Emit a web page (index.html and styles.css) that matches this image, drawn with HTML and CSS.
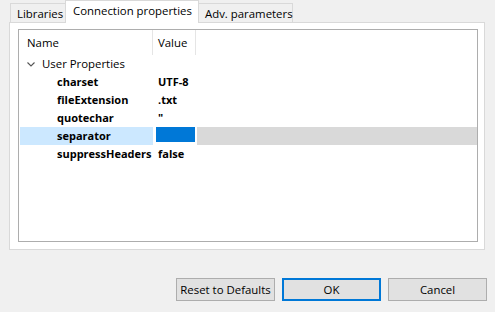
FILE: index.html
```html
<!DOCTYPE html>
<html>
<head>
<meta charset="utf-8">
<link rel="stylesheet" href="styles.css">
</head>
<body>
<div class="tabs">
  <div class="tab">Libraries</div>
  <div class="tab active">Connection properties</div>
  <div class="tab">Adv. parameters</div>
</div>
<div class="panel">
  <div class="tree">
    <div class="grid">
      <div class="hcell c1">Name</div>
      <div class="hcell c2">Value</div>
      <div class="hcell c3"></div>

      <div class="cell group">
        <svg class="chev" width="8" height="5" viewBox="0 0 8 5"><polyline points="0.5,0.5 4,4 7.5,0.5" fill="none" stroke="#555" stroke-width="1.1"/></svg>
        <span>User Properties</span>
      </div>
      <div class="cell"></div>
      <div class="cell"></div>

      <div class="cell name">charset</div>
      <div class="cell val">UTF-8</div>
      <div class="cell"></div>

      <div class="cell name">fileExtension</div>
      <div class="cell val">.txt</div>
      <div class="cell"></div>

      <div class="cell name">quotechar</div>
      <div class="cell val">"</div>
      <div class="cell"></div>

      <div class="cell name sel">separator</div>
      <div class="cell edit"><div class="editbox"></div></div>
      <div class="cell fill"><div class="greybox"></div></div>

      <div class="cell name">suppressHeaders</div>
      <div class="cell val">false</div>
      <div class="cell"></div>
    </div>
  </div>
</div>
<div class="footer">
  <button class="btn">Reset to Defaults</button>
  <button class="btn primary">OK</button>
  <button class="btn">Cancel</button>
</div>
</body>
</html>
```
FILE: styles.css
```css
html, body {
  margin: 0;
  padding: 0;
}
body {
  background: #f0f0f0;
  font-family: "Open Sans", "Noto Sans", sans-serif;
  font-size: 11.4px;
  color: #000;
  width: 495px;
  height: 312px;
  overflow: hidden;
}
.tabs {
  display: flex;
  align-items: flex-end;
  padding-left: 10px;
  height: 23px;
  margin-bottom: -1px;
  position: relative;
  z-index: 1;
}
.tab {
  height: 19px;
  margin-bottom: 1px;
  box-sizing: border-box;
  border: 1px solid #d9d9d9;
  border-bottom: none;
  background: #f0f0f0;
  padding: 0 6px;
  line-height: 19px;
  white-space: nowrap;
}
.tab + .tab {
  margin-left: -1px;
}
.tab.active {
  height: 23px;
  margin-bottom: 0;
  background: #fff;
  line-height: 20px;
  padding: 0 7px;
  position: relative;
  z-index: 2;
}
.tab:first-child {
  width: 56px;
}
.tab.active {
  width: 134px;
}
.tab:last-child {
  width: 95px;
}
.panel {
  margin-left: 9px;
  width: 476px;
  height: 228px;
  box-sizing: border-box;
  border: 1px solid #d9d9d9;
  background: #fff;
  padding: 6px 6px 7px 8px;
}
.tree {
  width: 460px;
  height: 213px;
  box-sizing: border-box;
  border: 1px solid #adadad;
  background: #fff;
  padding-left: 1px;
}
.grid {
  display: grid;
  grid-template-columns: 133px 43px 1fr;
  grid-template-rows: 25px;
  grid-auto-rows: 18px;
}
.hcell {
  height: 25px;
  line-height: 23px;
  box-sizing: border-box;
  padding-top: 1px;
  padding-bottom: 1px;
  grid-row: 1;
}
.hcell.c1 {
  padding-left: 7px;
  border-right: 1px solid #e5e5e5;
}
.hcell.c2 {
  padding-left: 5px;
  border-right: 1px solid #e5e5e5;
}
.cell {
  line-height: 18px;
  white-space: nowrap;
}
.group {
  display: flex;
  align-items: center;
  padding-left: 7px;
}
.chev {
  margin-right: 7px;
  margin-top: 1px;
}
.name {
  padding-left: 37px;
  font-weight: 700;
  font-size: 11px;
}
.val {
  padding-left: 5px;
  font-weight: 700;
  font-size: 11px;
}
.sel {
  background: #cce8ff;
}
.edit {
  padding-left: 3px;
}
.editbox {
  width: 39px;
  height: 15px;
  background: #0078d7;
}
.fill {
  padding-left: 1px;
}
.greybox {
  height: 18px;
  width: 280px;
  background: #d9d9d9;
}
.footer {
  display: flex;
  justify-content: flex-end;
  gap: 7px;
  padding-right: 8px;
  margin-top: 28px;
}
.btn {
  width: 99px;
  height: 23px;
  box-sizing: border-box;
  border: 1px solid #adadad;
  background: #e1e1e1;
  font-family: inherit;
  font-size: 11.4px;
  color: #000;
  padding: 0;
  margin: 0;
}
.btn.primary {
  border: 2px solid #0078d7;
}
```
